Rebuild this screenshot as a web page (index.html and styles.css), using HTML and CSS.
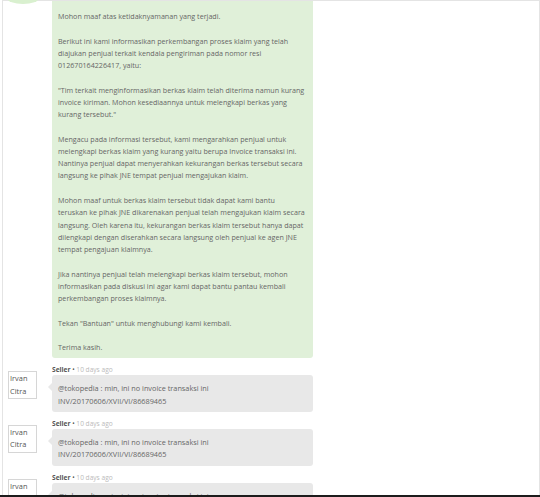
FILE: index.html
```html
<!DOCTYPE html>
<html lang="id">
<head>
    <meta charset="UTF-8">
    <meta name="viewport" content="width=device-width, initial-scale=1.0">
    <title>Diskusi Klaim</title>
    <link rel="stylesheet" href="styles.css">
</head>
<body>
    <div class="page">
        <div class="thread">
            <div class="message">
                <div class="avatar-col">
                    <div class="avatar-round"></div>
                </div>
                <div class="content-col">
                    <div class="bubble bubble-admin">
                        Mohon maaf atas ketidaknyamanan yang terjadi.<br><br>
                        Berikut ini kami informasikan perkembangan proses klaim yang telah diajukan penjual terkait kendala pengiriman pada nomor resi 012670164226417, yaitu:<br><br>
                        "Tim terkait menginformasikan berkas klaim telah diterima namun kurang invoice kiriman. Mohon kesediaannya untuk melengkapi berkas yang kurang tersebut."<br><br>
                        Mengacu pada informasi tersebut, kami mengarahkan penjual untuk melengkapi berkas klaim yang kurang yaitu berupa Invoice transaksi ini. Nantinya penjual dapat menyerahkan kekurangan berkas tersebut secara langsung ke pihak JNE tempat penjual mengajukan klaim.<br><br>
                        Mohon maaf untuk berkas klaim tersebut tidak dapat kami bantu teruskan ke pihak JNE dikarenakan penjual telah mengajukan klaim secara langsung. Oleh karena itu, kekurangan berkas klaim tersebut hanya dapat dilengkapi dengan diserahkan secara langsung oleh penjual ke agen JNE tempat pengajuan klaimnya.<br><br>
                        Jika nantinya penjual telah melengkapi berkas klaim tersebut, mohon informasikan pada diskusi ini agar kami dapat bantu pantau kembali perkembangan proses klaimnya.<br><br>
                        Tekan "Bantuan" untuk menghubungi kami kembali.<br><br>
                        Terima kasih.
                    </div>
                </div>
            </div>

            <div class="message">
                <div class="avatar-col">
                    <div class="avatar-box">Irvan Citra</div>
                </div>
                <div class="content-col">
                    <div class="meta"><b>Seller</b> <span class="dot">&bull;</span> 10 days ago</div>
                    <div class="bubble bubble-user">
                        @tokopedia : min, ini no invoice transaksi ini<br>
                        INV/20170606/XVII/VI/86689465
                    </div>
                </div>
            </div>

            <div class="message">
                <div class="avatar-col">
                    <div class="avatar-box">Irvan Citra</div>
                </div>
                <div class="content-col">
                    <div class="meta"><b>Seller</b> <span class="dot">&bull;</span> 10 days ago</div>
                    <div class="bubble bubble-user">
                        @tokopedia : min, ini no invoice transaksi ini<br>
                        INV/20170606/XVII/VI/86689465
                    </div>
                </div>
            </div>

            <div class="message">
                <div class="avatar-col">
                    <div class="avatar-box">Irvan Citra</div>
                </div>
                <div class="content-col">
                    <div class="meta"><b>Seller</b> <span class="dot">&bull;</span> 10 days ago</div>
                    <div class="bubble bubble-user">
                        @tokopedia : min, ini no invoice transaksi ini<br>
                        INV/20170606/XVII/VI/86689465
                    </div>
                </div>
            </div>
        </div>
    </div>
</body>
</html>
```

FILE: styles.css
```css
body {
    margin: 0;
    font-family: 'Open Sans', sans-serif;
    background-color: #fff;
    color: #666;
}

.page {
    height: 497px;
    box-sizing: border-box;
    border-bottom: 2px solid #1c1c1c;
    overflow: hidden;
}

.thread {
    margin-left: 2px;
    width: 536px;
    height: 100%;
    border: 1px solid #e4e4e4;
    border-bottom: none;
}

.message {
    display: flex;
    margin-bottom: 6px;
}

.avatar-col {
    position: relative;
    width: 49px;
    flex-shrink: 0;
}

.avatar-round {
    position: absolute;
    left: 4px;
    top: -9px;
    width: 32px;
    height: 12px;
    border-radius: 50%;
    background: #d9f0cf;
}

.avatar-box {
    margin: 7px 0 0 5px;
    width: 26px;
    height: 26px;
    border: 1px solid #d6d6d6;
    font-size: 7.4px;
    line-height: 12.5px;
    color: #555;
    padding-left: 1px;
    overflow: hidden;
}

.content-col {
    width: 261px;
}

.meta {
    font-size: 6.6px;
    line-height: 11px;
    color: #bbb;
}

.meta b,
.meta .dot {
    color: #555;
}

.bubble {
    position: relative;
    font-size: 7.3px;
    line-height: 12.26px;
    color: #666;
    border-radius: 3px;
    padding: 7px 6px 5px;
}

.bubble-admin {
    background: #e0f0d9;
    font-size: 7.15px;
    padding: 9px 7px 5px 6px;
    border-top-left-radius: 0;
    border-top-right-radius: 0;
}

.bubble-user {
    background: #e8e8e8;
}

.bubble-user::before {
    content: "";
    position: absolute;
    left: -4px;
    top: 8px;
    border-top: 4px solid transparent;
    border-bottom: 4px solid transparent;
    border-right: 4px solid #e8e8e8;
}
```
